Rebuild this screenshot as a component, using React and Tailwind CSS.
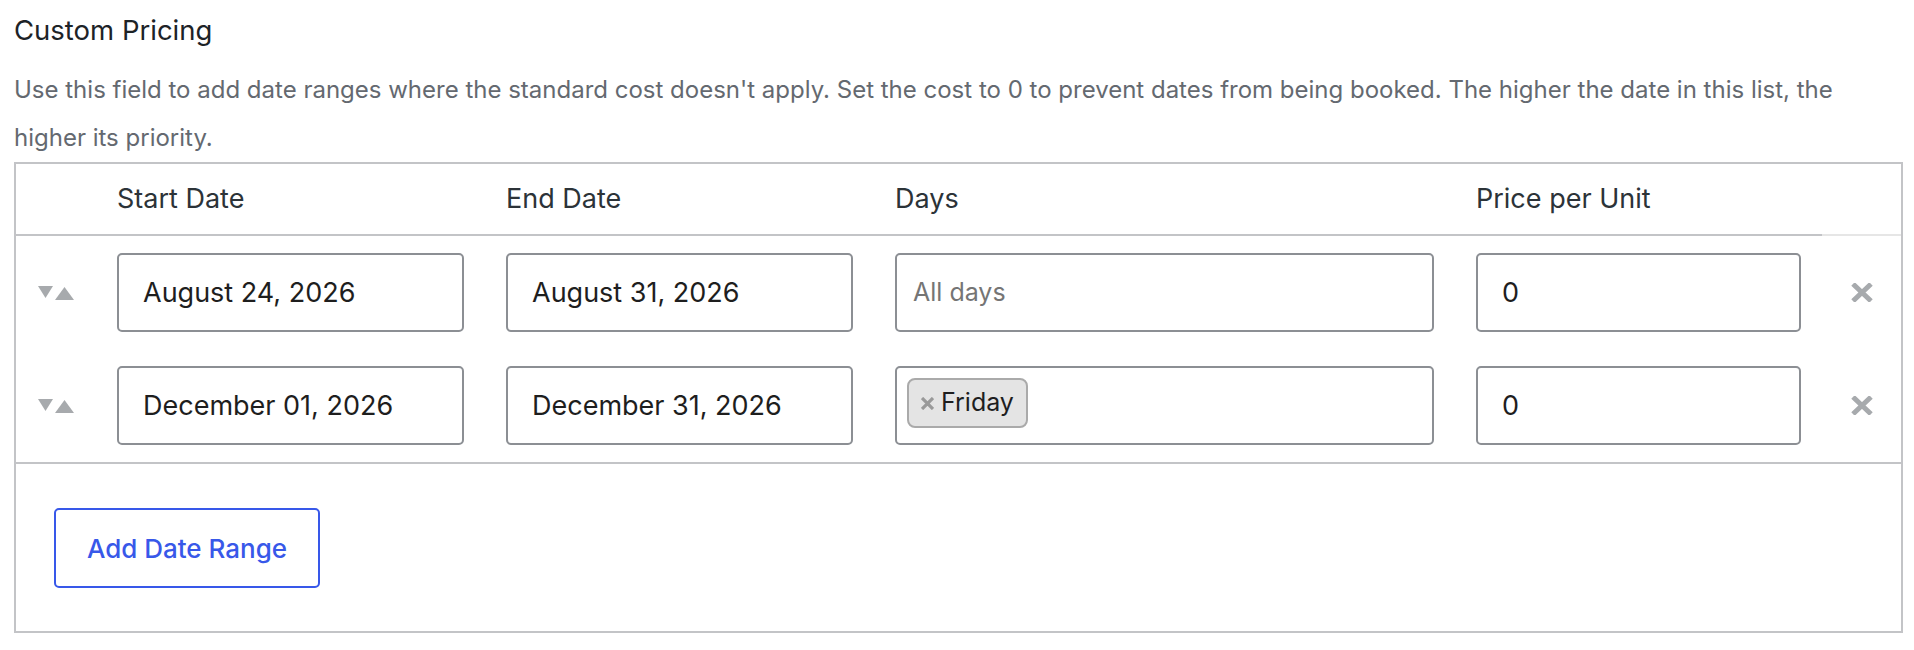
import React from "react";

const rows = [
  { id: 1, start: "August 24, 2026", end: "August 31, 2026", days: [], price: "0" },
  { id: 2, start: "December 01, 2026", end: "December 31, 2026", days: ["Friday"], price: "0" },
];

const SortArrows = () => (
  <svg width="37" height="16" viewBox="0 0 37 16" className="block">
    <polygon points="0,1 15,1 7.5,13" fill="#a7aaad" />
    <polygon points="17,15 36,15 26.5,2" fill="#a7aaad" />
  </svg>
);

const RemoveIcon = () => (
  <svg width="22" height="19" viewBox="0 0 22 19" className="block">
    <path d="M2 1 L20 18 M20 1 L2 18" stroke="#a7aaad" strokeWidth="5" />
  </svg>
);

const TextField = ({ value }) => (
  <input
    readOnly
    value={value}
    className="w-full h-[79px] border-2 border-[#8c8f94] rounded-[5px] pl-[24px] text-[27px] text-[#1e1e1e] bg-white outline-none"
  />
);

const DaysField = ({ days }) => (
  <div className="w-full h-[79px] border-2 border-[#8c8f94] rounded-[5px] bg-white flex items-start">
    {days.length === 0 ? (
      <span className="self-center pl-[16px] text-[25px] text-[#757575]">All days</span>
    ) : (
      days.map((d) => (
        <span
          key={d}
          className="mt-[10px] ml-[10px] h-[50px] pl-[12px] pr-[12px] flex items-center gap-[7px] bg-[#e4e4e4] border-2 border-[#aaaaaa] rounded-[8px] text-[25px] text-[#1e1e1e]"
        >
          <svg width="13" height="13" viewBox="0 0 13 13" className="block">
            <path d="M1 1 L12 12 M12 1 L1 12" stroke="#999999" strokeWidth="3.2" />
          </svg>
          {d}
        </span>
      ))
    )}
  </div>
);

export default function App() {
  return (
    <div
      className="bg-white min-h-screen pl-[14px] pt-[12px]"
      style={{ fontFamily: "Inter, 'Noto Sans', sans-serif" }}
    >
      <h2 className="text-[27.5px] leading-[36px] text-[#1d2327] font-normal">Custom Pricing</h2>
      <p className="mt-[18px] w-[1889px] text-[24px] leading-[48px] text-[#646970]">
        Use this field to add date ranges where the standard cost doesn&apos;t apply. Set the cost to 0 to prevent dates
        from being booked. The higher the date in this list, the higher its priority.
      </p>

      <div className="w-[1889px] border-2 border-[#c3c4c7]">
        <table className="w-full table-fixed border-collapse">
          <colgroup>
            <col className="w-[80px]" />
            <col className="w-[389px]" />
            <col className="w-[389px]" />
            <col className="w-[581px]" />
            <col className="w-[367px]" />
            <col className="w-[79px]" />
          </colgroup>
          <thead>
            <tr className="h-[71px] text-left text-[27px] text-[#2c3338]">
              <th className="border-b-2 border-[#c3c4c7]"></th>
              <th className="px-[21px] font-normal border-b-2 border-[#c3c4c7]">Start Date</th>
              <th className="px-[21px] font-normal border-b-2 border-[#c3c4c7]">End Date</th>
              <th className="px-[21px] font-normal border-b-2 border-[#c3c4c7]">Days</th>
              <th className="px-[21px] font-normal border-b-2 border-[#c3c4c7]">Price per Unit</th>
              <th className="border-b-2 border-[#e6e6e6]"></th>
            </tr>
          </thead>
          <tbody>
            {rows.map((r) => (
              <tr key={r.id}>
                <td className="py-[17px] pl-[22px] align-middle">
                  <SortArrows />
                </td>
                <td className="py-[17px] px-[21px]">
                  <TextField value={r.start} />
                </td>
                <td className="py-[17px] px-[21px]">
                  <TextField value={r.end} />
                </td>
                <td className="py-[17px] px-[21px]">
                  <DaysField days={r.days} />
                </td>
                <td className="py-[17px] px-[21px]">
                  <TextField value={r.price} />
                </td>
                <td className="py-[17px] align-middle">
                  <div className="flex justify-center">
                    <RemoveIcon />
                  </div>
                </td>
              </tr>
            ))}
          </tbody>
        </table>
        <div className="border-t-2 border-[#c3c4c7] pt-[44px] pb-[43px] pl-[38px]">
          <button className="w-[266px] h-[80px] border-2 border-[#3858e9] rounded-[5px] bg-white text-[26px] font-medium text-[#3858e9]">
            Add Date Range
          </button>
        </div>
      </div>
    </div>
  );
}
